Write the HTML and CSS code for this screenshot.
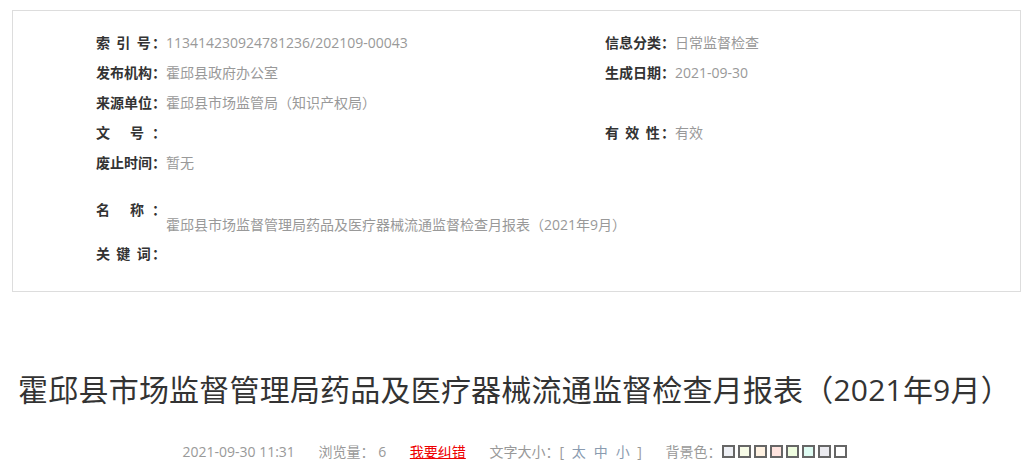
FILE: index.html
```html
<!DOCTYPE html>
<html lang="zh-CN">
<head>
    <meta charset="UTF-8">
    <title>霍邱县市场监督管理局药品及医疗器械流通监督检查月报表（2021年9月）</title>
    <link rel="stylesheet" href="styles.css">
</head>
<body>
    <div class="infobox">
        <div class="inforow">
            <div class="item"><span class="lab">索 引 号：</span><span class="val">113414230924781236/202109-00043</span></div>
            <div class="item"><span class="lab">信息分类：</span><span class="val">日常监督检查</span></div>
        </div>
        <div class="inforow">
            <div class="item"><span class="lab">发布机构：</span><span class="val">霍邱县政府办公室</span></div>
            <div class="item"><span class="lab">生成日期：</span><span class="val">2021-09-30</span></div>
        </div>
        <div class="inforow">
            <div class="item"><span class="lab">来源单位：</span><span class="val">霍邱县市场监管局（知识产权局）</span></div>
        </div>
        <div class="inforow">
            <div class="item"><span class="lab">文 号：</span><span class="val"></span></div>
            <div class="item"><span class="lab">有 效 性：</span><span class="val">有效</span></div>
        </div>
        <div class="inforow">
            <div class="item"><span class="lab">废止时间：</span><span class="val">暂无</span></div>
        </div>
        <div class="namerow">
            <span class="lab">名 称：</span>
            <div class="nameval">霍邱县市场监督管理局药品及医疗器械流通监督检查月报表（2021年9月）</div>
        </div>
        <div class="inforow">
            <div class="item"><span class="lab">关 键 词：</span><span class="val"></span></div>
        </div>
    </div>

    <h1 class="title">霍邱县市场监督管理局药品及医疗器械流通监督检查月报表（2021年9月）</h1>

    <div class="meta">
        <span>2021-09-30 11:31</span>
        <span>浏览量： 6</span>
        <a href="#" class="report">我要纠错</a>
        <span>文字大小：[ <a href="#" class="size">太</a><a href="#" class="size">中</a><a href="#" class="size">小</a> ]</span>
        <span class="bg">背景色：<i class="sw c1"></i><i class="sw c2"></i><i class="sw c3"></i><i class="sw c4"></i><i class="sw c5"></i><i class="sw c6"></i><i class="sw c7"></i><i class="sw c8"></i></span>
    </div>
</body>
</html>
```

FILE: styles.css
```css
body {
    margin: 0;
    background: #fff;
    color: #333;
    font-family: "Open Sans", "Noto Sans CJK SC", sans-serif;
    font-size: 14px;
}

.infobox {
    margin: 10px 8px 0 12px;
    padding: 17px 0 22px 83px;
    border: 1px solid #ddd;
}

.inforow {
    display: flex;
    height: 30px;
    line-height: 30px;
}

.item {
    flex: none;
    width: 509px;
    white-space: nowrap;
}

.item + .item {
    flex: 1;
    width: auto;
}

.lab {
    display: inline-block;
    width: 70px;
    font-weight: bold;
    color: #333;
    text-align: justify;
    text-align-last: justify;
    vertical-align: top;
}

.val {
    color: #999;
}

.namerow {
    margin-top: 24px;
    margin-bottom: 7px;
    line-height: 15px;
}

.nameval {
    margin-left: 70px;
    color: #999;
}

.title {
    margin: 78px 0 0;
    text-align: center;
    font-size: 30px;
    font-weight: normal;
    line-height: 40px;
    color: #333;
    letter-spacing: 0.2px;
}

.meta {
    margin-top: 32px;
    text-align: center;
    color: #999;
    font-size: 14px;
    line-height: 20px;
}

.meta > span, .meta > a {
    margin: 0 10px;
}

.meta a {
    color: #999;
    text-decoration: none;
}

.meta a.size {
    color: #8a9bb0;
    margin: 0 4px;
}

.meta a.report {
    color: #e00;
    text-decoration: underline;
}

.sw {
    display: inline-block;
    width: 9px;
    height: 9px;
    border: 2px solid #666;
    margin-right: 3px;
    vertical-align: -1px;
}

.sw:last-child {
    margin-right: 0;
}

.c1 { background: #eef0f5; }
.c2 { background: #f7fbe7; }
.c3 { background: #fff2e2; }
.c4 { background: #ffe4df; }
.c5 { background: #effde0; }
.c6 { background: #defbf2; }
.c7 { background: #ebebf0; }
.c8 { background: #fff; }
```
